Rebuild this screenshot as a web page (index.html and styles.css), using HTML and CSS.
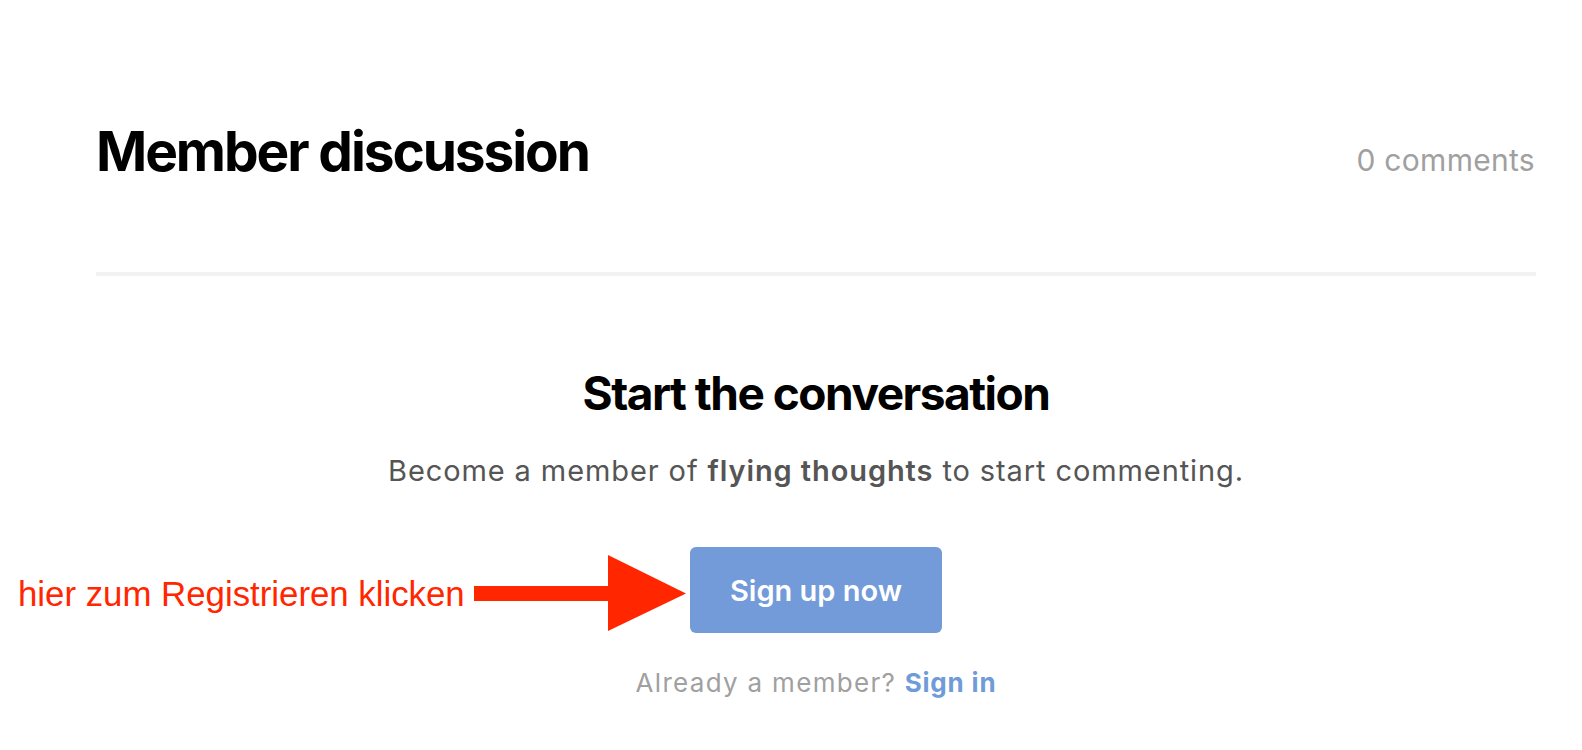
FILE: index.html
```html
<!DOCTYPE html>
<html lang="de">
<head>
<meta charset="utf-8">
<title>Member discussion</title>
<link rel="stylesheet" href="styles.css">
</head>
<body>
<main class="page">
  <section class="comments">
    <header class="comments-header">
      <h2 class="comments-title">Member discussion</h2>
      <span class="comments-count">0 comments</span>
    </header>
    <hr class="divider">
    <div class="cta">
      <h3 class="cta-title">Start the conversation</h3>
      <p class="cta-text">Become a member of <strong>flying thoughts</strong> to start commenting.</p>
      <button class="cta-button" type="button">Sign up now</button>
      <p class="cta-signin">Already a member? <a href="#" class="signin-link">Sign in</a></p>
    </div>
  </section>
  <div class="annotation">
    <span class="annotation-text">hier zum Registrieren klicken</span>
    <svg class="annotation-arrow" width="212" height="76" viewBox="0 0 212 76" aria-hidden="true">
      <rect x="0" y="31" width="136" height="15" fill="#ff2600"/>
      <polygon points="134,0 212,38.5 134,76" fill="#ff2600"/>
    </svg>
  </div>
</main>
</body>
</html>
```
FILE: styles.css
```css
html, body {
  margin: 0;
  padding: 0;
  background: #ffffff;
}

body {
  font-family: Inter, "Noto Sans", "Liberation Sans", sans-serif;
  color: #000;
}

.page {
  position: relative;
  width: 1582px;
  height: 750px;
  overflow: hidden;
}

.comments {
  margin-left: 96px;
  width: 1440px;
  padding-top: 118px;
}

.comments-header {
  display: flex;
  justify-content: space-between;
  align-items: baseline;
}

.comments-title {
  margin: 0;
  font-size: 55px;
  line-height: 66px;
  font-weight: 700;
  letter-spacing: -2.1px;
  color: #000;
}

.comments-count {
  font-size: 30px;
  color: #a0a0a0;
  letter-spacing: 0.3px;
  margin-right: 1px;
}

.divider {
  margin: 88px 0 0;
  border: 0;
  height: 4px;
  background: #f1f2f4;
}

.cta {
  display: flex;
  flex-direction: column;
  align-items: center;
  padding-top: 90px;
}

.cta-title {
  margin: 0;
  font-size: 46px;
  line-height: 55px;
  font-weight: 700;
  letter-spacing: -1.5px;
  color: #000;
}

.cta-text {
  margin: 30px 0 0;
  font-size: 29px;
  line-height: 39px;
  color: #555555;
  letter-spacing: 0.9px;
}

.cta-text strong {
  font-weight: 600;
}

.cta-button {
  margin-top: 57px;
  width: 252px;
  height: 86px;
  border: 0;
  border-radius: 6px;
  background: #739bd9;
  color: #ffffff;
  font-family: inherit;
  font-size: 29px;
  font-weight: 600;
  letter-spacing: 0;
}

.cta-signin {
  margin: 32px 0 0;
  font-size: 26px;
  line-height: 35px;
  color: #a0a0a0;
  letter-spacing: 1.3px;
}

.signin-link {
  color: #6f9bd9;
  font-weight: 700;
  letter-spacing: 0.8px;
  text-decoration: none;
}

.annotation {
  position: absolute;
  left: 0;
  top: 0;
  width: 0;
  height: 0;
}

.annotation-text {
  position: absolute;
  left: 18px;
  top: 577px;
  white-space: nowrap;
  font-family: "Liberation Sans", Arial, sans-serif;
  font-size: 34.8px;
  line-height: 34px;
  color: #ff2600;
}

.annotation-arrow {
  position: absolute;
  left: 474px;
  top: 555px;
  display: block;
}
```
